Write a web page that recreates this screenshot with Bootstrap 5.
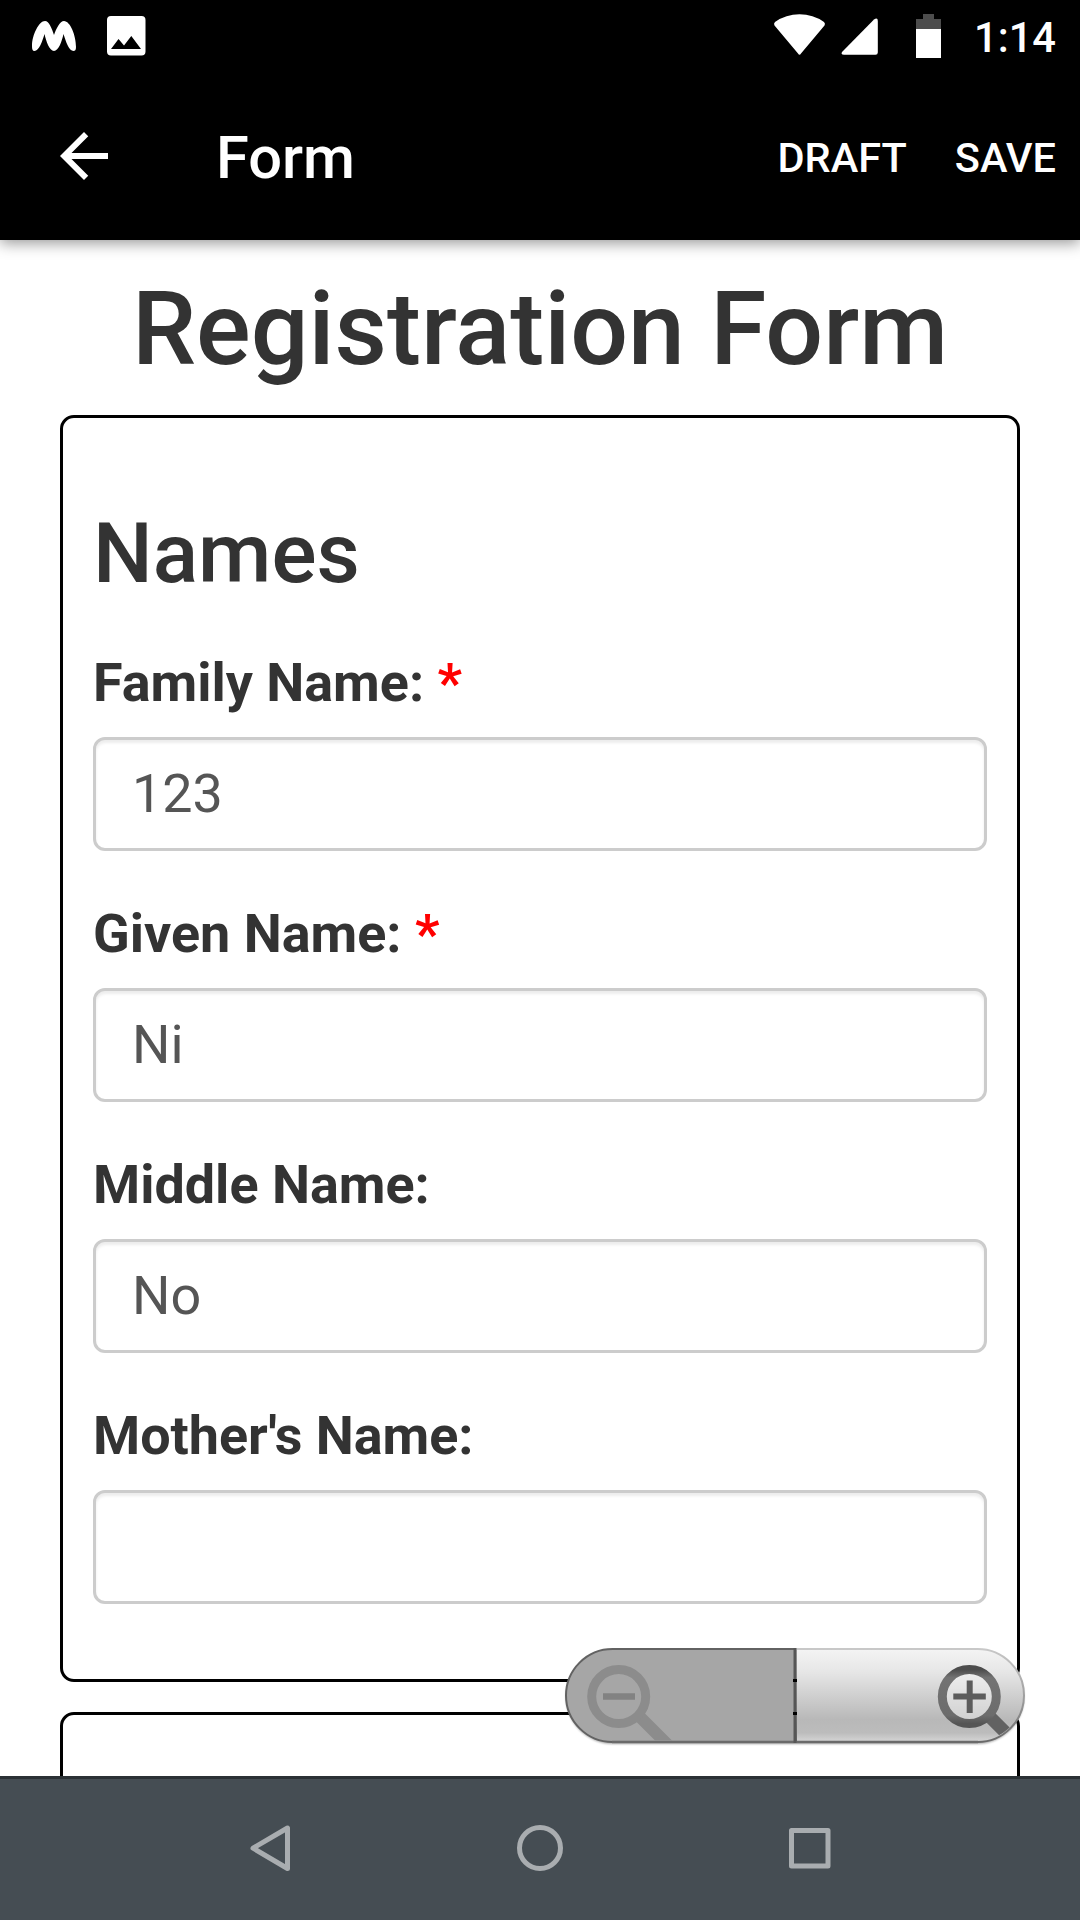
<!DOCTYPE html>
<html lang="en">
<head>
<meta charset="utf-8">
<meta name="viewport" content="width=device-width, initial-scale=1">
<title>Form</title>
<link href="https://cdn.jsdelivr.net/npm/bootstrap@5.3.0/dist/css/bootstrap.min.css" rel="stylesheet">
<style>
  body { font-family: Roboto, "Noto Sans", sans-serif; color: #333; background: #fff; }
  svg { display: block; flex: none; }
  .screen { width: 1080px; height: 1920px; }
  .top-area { height: 240px; background: #000; box-shadow: 0 3px 14px rgba(0,0,0,.42); z-index: 2; }
  .status-row { height: 72px; padding: 0 24px 0 32px; }
  .clock { width: 85px; font-size: 41.6px; font-weight: 500; line-height: 72px; padding-top: 3px; text-align: right; white-space: nowrap; }
  .app-bar { height: 168px; padding: 0 24px 0 48px; }
  .app-title { font-size: 59.6px; font-weight: 500; line-height: 72px; margin-left: 96px; padding-top: 4px; }
  .action { font-size: 41.5px; font-weight: 500; line-height: 72px; padding: 4px 0 0; border: 0; color: #fff; }
  .page-area { padding: 32px 60px 0; }
  .page-title { font-size: 102px; line-height: 114px; font-weight: 500; margin-bottom: 29px; white-space: nowrap; }
  .group-box { border: 3px solid #000; border-radius: 14px; padding: 0 30px 30px; margin-bottom: 30px; }
  .group-title { font-size: 84.2px; line-height: 92px; font-weight: 500; margin: 0 0 45px; padding-top: 89.5px; }
  .field { margin-bottom: 45px; }
  .field .form-label { display: block; font-size: 53.9px; line-height: 76px; font-weight: 700; margin-bottom: 16px; }
  .req { color: #f00; }
  .field .form-control { height: 114px; font-size: 53.9px; line-height: 76px; color: #555; border: 3px solid #ccc; border-radius: 12px; padding: 16px 36px; box-shadow: inset 0 3px 3px rgba(0,0,0,.075); }
  .next-box { height: 300px; }
  .nav-keys { height: 144px; background: #454d53; border-top: 3px solid #2b3135; z-index: 3; }
  .zoom-ctl { left: 560px; top: 1640px; z-index: 2; }
</style>
</head>
<body>
<div class="screen position-relative overflow-hidden d-flex flex-column">
  <header class="top-area position-relative text-white flex-shrink-0">
    <div class="status-row d-flex align-items-center justify-content-between">
      <svg width="120" height="72" viewBox="32 0 120 72" fill="#fff">
        <path d="M32 46C32 35 39 21 45 21C49 21 52 29 54 35C56 29 60 21 64 21C70 21 76 35 76 47C76 50 75 51 73.500 51C69 51 66 42 63.500 34C62 41 58.500 51 54 51C49.500 51 46 41 44.500 34C42.500 41 39 51 34.500 51C33 51 32 50 32 46Z"/>
        <path fill-rule="evenodd" d="M111 16h30.500a4 4 0 0 1 4 4v31.500a4 4 0 0 1-4 4H111a4 4 0 0 1-4-4V20a4 4 0 0 1 4-4ZM111 49h30L131.300 36l-7.300 9.500L118.500 39Z"/>
      </svg>
      <div class="d-flex align-items-center">
        <svg width="201" height="72" viewBox="770 0 201 72" fill="#fff">
          <path d="M774.500 25.500Q773.300 23.500 775 22Q786 14.300 799.500 14.300T824 22Q825.700 23.500 824.500 25.500L801 53.500Q799.500 56 798 53.500Z"/>
          <path d="M842.500 51.500L874 19.500Q877.800 17 877.800 21V52.500Q877.800 54.800 875.500 54.800H844Q840 54.500 842.500 51.500Z"/>
          <path fill="#4d4d4d" d="M923 14h11v5h7v11h-25V19h7Z"/>
          <path d="M916 29h25v29h-25Z"/>
        </svg>
        <span class="clock">1:14</span>
      </div>
    </div>
    <nav class="app-bar d-flex align-items-center">
      <svg width="72" height="72" viewBox="0 0 24 24" fill="#fff"><path d="M20 11H7.830l5.590-5.590L12 4l-8 8 8 8 1.410-1.410L7.830 13H20v-2z"/></svg>
      <span class="app-title">Form</span>
      <div class="d-flex ms-auto gap-5">
        <button type="button" class="btn action rounded-0">DRAFT</button>
        <button type="button" class="btn action rounded-0">SAVE</button>
      </div>
    </nav>
  </header>

  <main class="page-area flex-grow-1 overflow-hidden">
    <h1 class="page-title text-center">Registration Form</h1>
    <section class="group-box">
      <h2 class="group-title">Names</h2>
      <div class="field"><label class="form-label" for="family">Family Name: <span class="req">*</span></label><input id="family" class="form-control" type="text" value="123"></div>
      <div class="field"><label class="form-label" for="given">Given Name: <span class="req">*</span></label><input id="given" class="form-control" type="text" value="Ni"></div>
      <div class="field"><label class="form-label" for="middle">Middle Name:</label><input id="middle" class="form-control" type="text" value="No"></div>
      <div class="field"><label class="form-label" for="mother">Mother's Name:</label><input id="mother" class="form-control" type="text"></div>
    </section>
    <section class="group-box next-box"></section>
  </main>

  <!-- Floating zoom control -->
  <svg class="zoom-ctl position-absolute" width="470" height="112" viewBox="560 1640 470 112">
    <defs>
      <linearGradient id="gIn" x1="0" y1="0" x2="0" y2="1"><stop offset="0" stop-color="#f4f4f4"/><stop offset=".25" stop-color="#e6e6e6"/><stop offset=".76" stop-color="#b8b8b8"/><stop offset=".9" stop-color="#bcbcbc"/><stop offset="1" stop-color="#d6d6d6"/></linearGradient>
      <linearGradient id="gEdge" x1="0" y1="0" x2="0" y2="1"><stop offset="0" stop-color="#c8c8c8"/><stop offset=".5" stop-color="#a0a0a0"/><stop offset="1" stop-color="#686868"/></linearGradient>
      <linearGradient id="gLens" x1="0" y1="0" x2="0" y2="1"><stop offset="0" stop-color="#4c4c4c"/><stop offset=".15" stop-color="#737373"/><stop offset=".85" stop-color="#6c6c6c"/><stop offset="1" stop-color="#555"/></linearGradient>
      <filter id="soft" x="-5%" y="-20%" width="110%" height="140%"><feGaussianBlur stdDeviation="1.300"/></filter>
      <clipPath id="pill"><rect x="567" y="1650" width="456" height="90.500" rx="45.200"/></clipPath>
    </defs>
    <rect x="566" y="1650" width="458" height="94" rx="47" fill="#000" opacity=".35" filter="url(#soft)"/>
    <path d="M795 1649H612.500a46.500 46.500 0 0 0 0 93H795Z" fill="#a6a6a6" stroke="#626262" stroke-width="2"/>
    <path d="M796 1649H977.500a46.500 46.500 0 0 1 0 93H796Z" fill="url(#gIn)" stroke="url(#gEdge)" stroke-width="2"/>
    <path d="M612 1742H978" stroke="#6a6a6a" stroke-width="2.500"/>
    <path d="M795 1648V1743" stroke="#565656" stroke-width="3"/>
    <path d="M793 1680.500h4M793 1713.500h4" stroke="#000" stroke-width="3"/>
    <g clip-path="url(#pill)" fill="none">
      <path d="M638 1715L672 1749" stroke="#8c8c8c" stroke-width="12"/>
      <circle cx="618.700" cy="1696.600" r="27" stroke="#8c8c8c" stroke-width="9"/>
      <path d="M603 1696.600h32" stroke="#828282" stroke-width="6.500"/>
      <path d="M989 1716L1005.500 1732.500" stroke="#626262" stroke-width="13"/>
      <circle cx="969.300" cy="1696.600" r="27" fill="#fff" fill-opacity=".35" stroke="url(#gLens)" stroke-width="9"/>
      <path d="M953.300 1696.600h32.500M969.700 1680.500v32.500" stroke="#5c5c5c" stroke-width="6"/>
    </g>
  </svg>

  <footer class="nav-keys position-relative flex-shrink-0">
    <svg width="1080" height="141" viewBox="0 1779 1080 141" fill="none" stroke="#a9adb0" stroke-width="5" stroke-linejoin="round">
      <path d="M287.500 1828V1868.500L253 1848.200Z"/>
      <circle cx="540" cy="1848" r="20.500"/>
      <rect x="791.500" y="1830.500" width="36.500" height="35.500"/>
    </svg>
  </footer>
</div>
<script src="https://cdn.jsdelivr.net/npm/bootstrap@5.3.0/dist/js/bootstrap.bundle.min.js"></script>
</body>
</html>
